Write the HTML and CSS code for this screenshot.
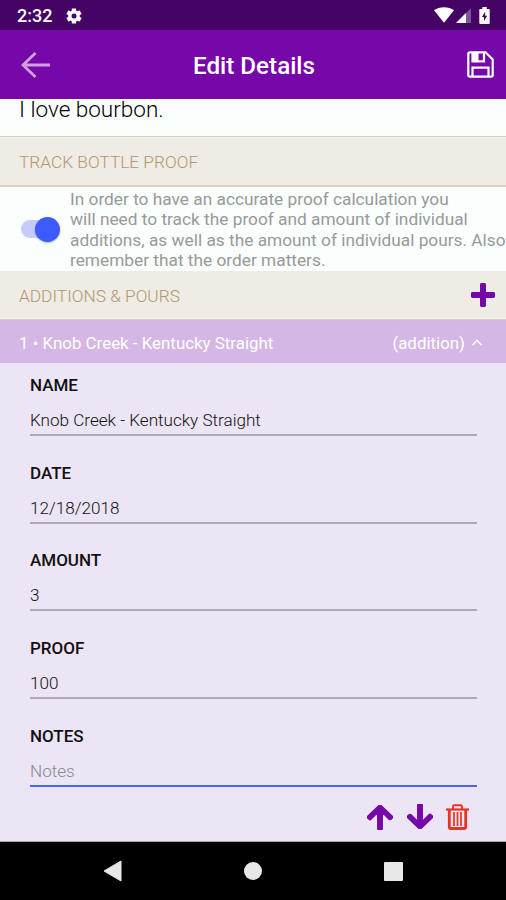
FILE: index.html
```html
<!DOCTYPE html>
<html lang="en">
<head>
    <meta charset="UTF-8">
    <meta name="viewport" content="width=device-width, initial-scale=1.0">
    <title>Edit Details</title>
    <link rel="stylesheet" href="styles.css">
</head>
<body>

<div class="status-bar">
    <span class="clock">2:32</span>
    <svg class="gear" width="16" height="16" viewBox="0 0 16 16">
        <g stroke="#fff" stroke-width="4.4">
            <path d="M8 .4v15.2M1.4 4.2l13.2 7.6M1.4 11.8l13.2-7.6"/>
        </g>
        <circle cx="8" cy="8" r="4.2" fill="none" stroke="#fff" stroke-width="3.2"/>
        <circle cx="8" cy="8" r="2.5" fill="#450365"/>
    </svg>
    <div class="status-icons">
        <svg width="20" height="16" viewBox="0 0 20 16">
            <path d="M0 3.2C5.500-.9 14.500-.9 20 3.200L10 15.700z" fill="#fff"/>
        </svg>
        <svg width="15" height="16" viewBox="0 0 15 16">
            <path d="M0 16L15 1v15z" fill="#7d5494"/>
            <path d="M0 16l10-10v10z" fill="#fff"/>
        </svg>
        <svg class="battery" width="11" height="17" viewBox="0 0 11 18">
            <path d="M3.200 0h4.600v2H10q1 0 1 1v14q0 1-1 1H1q-1 0-1-1V3q0-1 1-1h2.200z" fill="#fff"/>
            <path d="M6.200 5L2.800 10.500h2.100V15l3.400-5.800H6.200z" fill="#450365"/>
        </svg>
    </div>
</div>

<header class="header">
    <button type="button" class="icon-button" aria-label="Back">
        <svg width="29" height="26" viewBox="0 0 29 26" fill="none" stroke="#cf9fe2" stroke-width="2.800">
            <path d="M14.500 1L2 13l12.500 12M2 13h27"/>
        </svg>
    </button>
    <h1>Edit Details</h1>
    <button type="button" class="icon-button" aria-label="Save">
        <svg width="27" height="27" viewBox="0 0 27 27" fill="none" stroke="#fff" stroke-width="2.200">
            <path d="M3 1.300h15.500l7.200 7.200V24q0 1.700-1.700 1.700H3q-1.700 0-1.700-1.700V3Q1.300 1.300 3 1.300z"/>
            <path d="M5.500 1.500v8.800h11.500V1.500M5.500 25.500v-8.800h16v8.800"/>
            <path d="M6 1.500h5.500v8.500H6z" fill="#fff" stroke="none"/>
        </svg>
    </button>
</header>

<main>
    <p class="description">I love bourbon.</p>

    <h2 class="section-title">TRACK BOTTLE PROOF</h2>
    <div class="track">
        <label class="switch">
            <input type="checkbox" checked>
            <span class="slider"></span>
        </label>
        <p>In order to have an accurate proof calculation you<br>will need to track the proof and amount of individual<br>additions, as well as the amount of individual pours. Also<br>remember that the order matters.</p>
    </div>

    <h2 class="section-title additions">
        <span>ADDITIONS &amp; POURS</span>
        <svg width="24" height="24" viewBox="0 0 24 24" fill="#7607a9">
            <rect x="9" y="0" width="6" height="24" rx="1.400"/>
            <rect x="0" y="9" width="24" height="6" rx="1.400"/>
        </svg>
    </h2>

    <div class="entry-header">
        <span class="entry-name">1 • Knob Creek - Kentucky Straight</span>
        <span class="entry-type">(addition)</span>
        <svg width="10" height="7" viewBox="0 0 10 7" fill="none" stroke="#fff" stroke-width="1.500">
            <path d="M.5 6L5 1.300 9.500 6"/>
        </svg>
    </div>

    <form class="entry-form">
        <label class="field">
            <span>NAME</span>
            <input type="text" value="Knob Creek - Kentucky Straight">
        </label>
        <label class="field">
            <span>DATE</span>
            <input type="text" value="12/18/2018">
        </label>
        <label class="field">
            <span>AMOUNT</span>
            <input type="text" value="3">
        </label>
        <label class="field">
            <span>PROOF</span>
            <input type="text" value="100">
        </label>
        <label class="field active">
            <span>NOTES</span>
            <input type="text" placeholder="Notes">
        </label>
        <div class="actions">
            <svg class="up" width="26" height="25" viewBox="0 32 448 448" preserveAspectRatio="none" fill="#7607a9" stroke="#7607a9" stroke-width="22">
                <path d="M34.900 289.500l-22.200-22.200c-9.400-9.400-9.400-24.600 0-33.900L207 39c9.400-9.400 24.600-9.400 33.900 0l194.300 194.300c9.400 9.400 9.400 24.600 0 33.900L413 289.400c-9.500 9.500-25 9.300-34.300-.4L264 168.600V456c0 13.300-10.700 24-24 24h-32c-13.300 0-24-10.700-24-24V168.600L69.200 289.100c-9.300 9.800-24.800 10-34.300.4z"/>
            </svg>
            <svg class="down" width="26" height="25" viewBox="0 32 448 448" preserveAspectRatio="none" fill="#7607a9" stroke="#7607a9" stroke-width="22">
                <path d="M34.900 289.500l-22.200-22.200c-9.400-9.400-9.400-24.600 0-33.900L207 39c9.400-9.400 24.600-9.400 33.900 0l194.300 194.300c9.400 9.400 9.400 24.600 0 33.900L413 289.400c-9.500 9.500-25 9.300-34.300-.4L264 168.600V456c0 13.300-10.700 24-24 24h-32c-13.300 0-24-10.700-24-24V168.600L69.200 289.100c-9.300 9.800-24.800 10-34.300.4z"/>
            </svg>
            <svg class="trash" width="23" height="26" viewBox="0 0 23 26" fill="none" stroke="#e93323">
                <path d="M0 5.500h23" stroke-width="2.200"/>
                <path d="M7 5V2.500Q7 1.200 8.300 1.200h6.400Q16 1.200 16 2.500V5" stroke-width="1.900"/>
                <path d="M3.300 6v17q0 1.500 1.500 1.500h13.400q1.500 0 1.500-1.500V6" stroke-width="2.800"/>
                <path d="M8 8v14M11.500 8v14M15 8v14" stroke-width="1.700"/>
            </svg>
        </div>
    </form>
</main>

<nav class="nav-bar">
    <svg width="19" height="22" viewBox="0 0 19 22">
        <path d="M1 11L18 1v20z" fill="#e8e8e8" stroke="#e8e8e8" stroke-linejoin="round"/>
    </svg>
    <span class="home"></span>
    <span class="recent"></span>
</nav>

</body>
</html>
```

FILE: styles.css
```css
* {
    box-sizing: border-box;
}

body {
    display: flex;
    flex-direction: column;
    height: 900px;
    margin: 0;
    overflow: hidden;
    background-color: #fafffe;
    font-family: Roboto, "Liberation Sans", sans-serif;
}

h1, h2, p {
    margin: 0;
}

svg {
    display: block;
    flex-shrink: 0;
}

.status-bar {
    display: flex;
    align-items: center;
    height: 30px;
    padding: 0 16px 0 17px;
    background-color: #450365;
    color: #fff;
}

.clock {
    width: 49px;
    font-size: 18px;
    font-weight: 500;
    padding-top: 1px;
}

.gear {
    margin-top: 1px;
}

.status-icons {
    display: flex;
    align-items: center;
    gap: 2px;
    margin-left: auto;
}

.battery {
    margin-left: 6px;
}

.header {
    display: flex;
    align-items: center;
    justify-content: space-between;
    height: 69px;
    padding: 0 12px 0 21px;
    background-color: #7607a9;
}

.header h1 {
    margin-right: 9px;
    padding-top: 2px;
    color: #fff;
    font-size: 24.2px;
    font-weight: 500;
}

.icon-button {
    padding: 0;
    border: none;
    background: none;
    cursor: pointer;
}

main {
    flex: 1;
}

.description {
    height: 37px;
    padding-left: 19px;
    font-size: 22.5px;
    font-weight: 300;
    line-height: 21px;
    color: #000;
}

.section-title {
    display: flex;
    align-items: center;
    justify-content: space-between;
    height: 51px;
    padding: 1px 11px 0 19px;
    border-top: 1px solid #ddd0bf;
    border-bottom: 2px solid #ddd0bf;
    background-color: #eeece5;
    color: #b2966c;
    font-size: 17.3px;
    font-weight: 300;
}

.additions {
    height: 49px;
    border-top: none;
    border-bottom-width: 1px;
    padding-top: 0;
}

.additions span {
    padding-top: 2px;
}

.track {
    display: flex;
    align-items: center;
    height: 84px;
    padding-left: 21px;
}

.track p {
    padding-top: 1px;
    color: #999;
    font-size: 17.3px;
    line-height: 20.2px;
    white-space: nowrap;
}

.switch {
    position: relative;
    width: 49px;
    height: 26px;
    flex-shrink: 0;
}

.switch input {
    position: absolute;
    opacity: 0;
}

.slider {
    display: block;
    width: 34px;
    height: 18px;
    margin-top: 4px;
    border-radius: 9px;
    background-color: #c5cbff;
}

.slider:after {
    content: "";
    position: absolute;
    left: 14px;
    top: 1px;
    width: 25px;
    height: 25px;
    border-radius: 50%;
    background-color: #3d5afe;
    box-shadow: 0 1px 2px rgba(0,0,0,0.3);
}

.entry-header {
    display: flex;
    align-items: center;
    height: 43px;
    padding: 2px 24px 0 19px;
    background-color: #d5b7e5;
    color: #fff;
    font-size: 16.9px;
}

.entry-type {
    margin: 0 7px 0 auto;
}

.entry-form {
    height: 479px;
    padding: 12px 29px 0 30px;
    border-bottom: 1px solid #aaa6ae;
    background-color: #ece5f5;
}

.field {
    display: block;
    height: 87.7px;
}

.field span {
    display: block;
    color: #111;
    font-size: 17px;
    font-weight: 500;
    line-height: 20px;
}

.field input {
    display: block;
    width: 100%;
    height: 41px;
    padding: 11px 0 0;
    border: none;
    border-bottom: 2px solid #aea8b6;
    outline: none;
    background: none;
    color: #111;
    font-family: inherit;
    font-size: 17.1px;
    font-weight: 300;
}

.field input::placeholder {
    color: #888;
}

.field.active input {
    border-bottom-color: #4a66f5;
}

.actions {
    display: flex;
    align-items: center;
    justify-content: flex-end;
    gap: 14px;
    padding-right: 8px;
    margin-top: -10px;
}

.up {
    margin-top: 2px;
}

.down {
    transform: rotate(180deg);
}

.trash {
    margin-left: -1px;
}

.nav-bar {
    display: flex;
    align-items: center;
    justify-content: space-between;
    height: 58px;
    padding: 0 103px;
    background-color: #000;
}

.home {
    width: 18px;
    height: 18px;
    border-radius: 50%;
    background-color: #e8e8e8;
}

.recent {
    width: 19px;
    height: 19px;
    border-radius: 1px;
    background-color: #e8e8e8;
}
```
